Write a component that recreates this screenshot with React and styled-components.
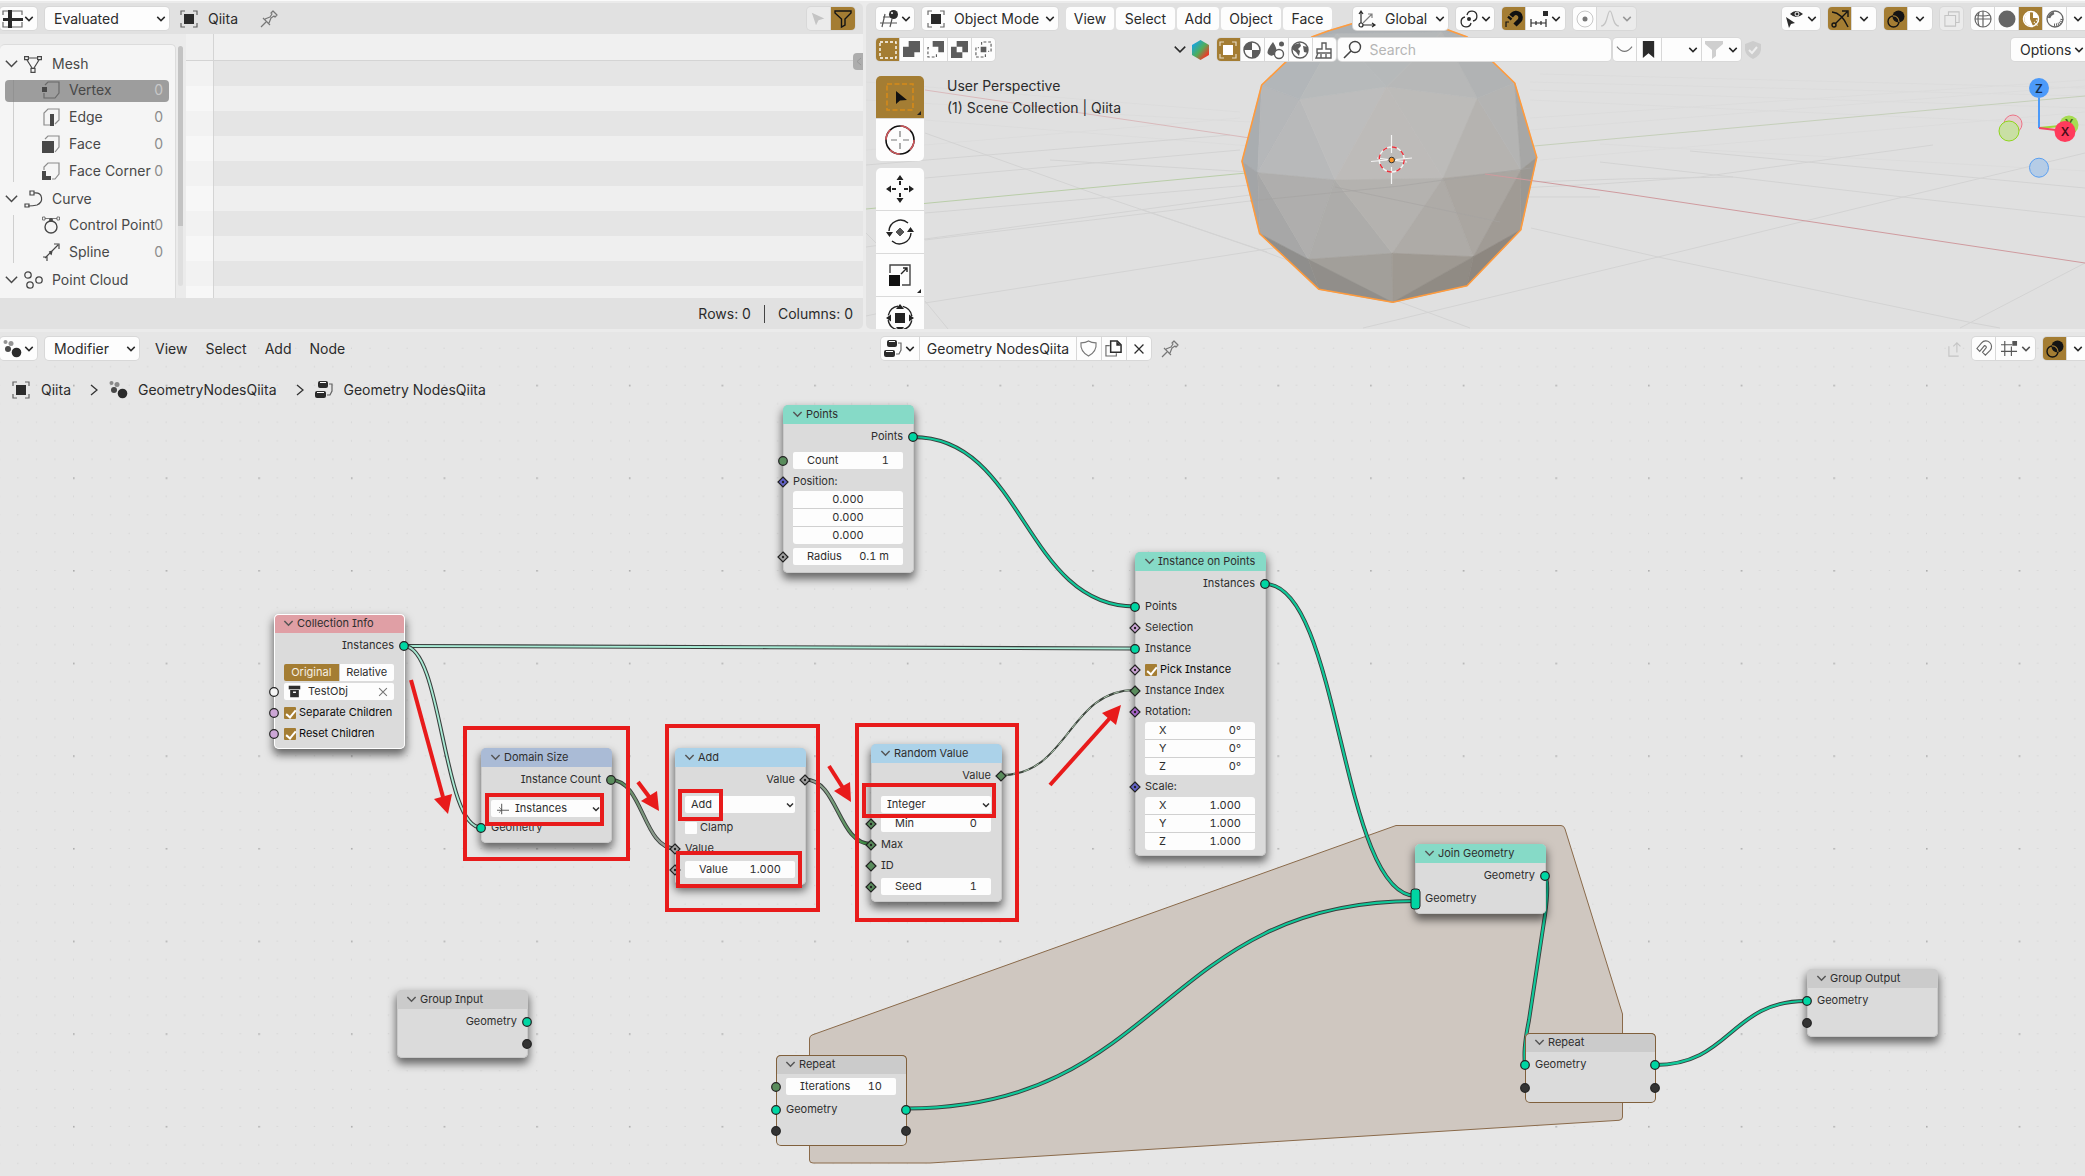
import React from 'react';
import styled, { createGlobalStyle, css } from 'styled-components';

const GOLD = '#a47d33';
const WIRE = '#10c99a';

const GlobalStyle = createGlobalStyle`
  * { box-sizing: border-box; }
  body {
    margin: 0;
    background: #ebebeb;
    color: #2b2b2b;
    font-family: Inter, "Noto Sans", sans-serif;
    font-size: 14px;
    line-height: 18px;
    overflow: hidden;
  }
  button, input, select {
    font: inherit;
    color: inherit;
    margin: 0;
    padding: 0;
    border: 0;
    background: none;
    outline: none;
  }
  select { appearance: none; }
  ul { list-style: none; margin: 0; padding: 0; }
  svg { display: block; flex: none; }
`;

/* ---------- icons ---------- */

const s = (d, extra = {}) => (
  <path d={d} fill="none" stroke="currentColor" strokeWidth="1.2" {...extra} />
);
const f = (d, extra = {}) => <path d={d} fill="currentColor" {...extra} />;

const ICONS = {
  spreadsheet: (
    <>
      {s('M0 5V1H5M9 1H19V5M19 12V17H9M5 17H0V12', { opacity: 0.7 })}
      {f('M5 0H9V18H5Z')}
      {f('M0 8H20V11H0Z')}
    </>
  ),
  object: (
    <>
      {s('M1 5V1H5M13 1H17V5M17 13V17H13M5 17H1V13', { opacity: 0.7 })}
      {f('M4 4H14V14H4Z')}
    </>
  ),
  pin: s('M1 17L6 12M3 8L10 15M5 9L10 7L12 4L11 3L13 1L17 5L15 7L14 6L11 8L9 13', {
    strokeLinejoin: 'round',
  }),
  cursor: f('M1 2L16 9L9 11L6 17Z'),
  filter: s('M1 1H17V3L11 9V15L7.500 17V9L1 3Z', { strokeWidth: 1.4 }),
  filterFill: f('M0 0H18V3L11 9V15L7 18V9L0 3Z'),
  mesh: (
    <>
      {s('M4 3H14M3 5L8 13M15 5L10 13')}
      {s('M.6 1.600H4.400V4.600H.6ZM13.600 1.600H17.400V4.600H13.600ZM7 13.400H11V17.400H7Z')}
    </>
  ),
  vertex: (
    <>
      {s('M3 4L6 1H17V12L13 17H2V12', { opacity: 0.6 })}
      {f('M0 6H5V11H0Z')}
    </>
  ),
  edge: (
    <>
      {s('M8 17H2V5L6 1H17V12L13 16', { opacity: 0.6 })}
      {f('M8 6H12V18H8Z')}
    </>
  ),
  face: (
    <>
      {s('M3 4L6 1H17V12L13 17', { opacity: 0.6 })}
      {f('M0 6H12V18H0Z')}
    </>
  ),
  corner: (
    <>
      {s('M2 8V5L6 1H17V12L13 17H10', { opacity: 0.6 })}
      {f('M0 9H4V14H9V18H0Z')}
    </>
  ),
  curve: (
    <>
      {s('M10 3C19 2 20 12 13 15Q9 16 4 16')}
      {s('M6 1H10V5H6ZM1 14H5V17H1Z')}
    </>
  ),
  control: (
    <>
      <circle cx="9" cy="11" r="6" fill="none" stroke="currentColor" strokeWidth="1.400" />
      {s('M3 2.500H15', { opacity: 0.7 })}
      {s('M.5 1H3V4H.5ZM15 1H17.500V4H15Z', { opacity: 0.7, strokeWidth: 1 })}
      <circle cx="9" cy="4" r="2" fill="currentColor" />
    </>
  ),
  spline: s('M3 15L16 2M12 1H17V6M1 14H5V18M7 9L10 8M9 12L10 8'),
  points: (
    <g fill="none" stroke="currentColor" strokeWidth="1.300">
      <circle cx="4" cy="4" r="3.200" />
      <circle cx="15" cy="9" r="3.200" />
      <circle cx="6" cy="14" r="3.200" />
    </g>
  ),
  viewport: (
    <>
      {s('M3 7H12M0 13H17M5 4L2 17M12 9L10 17', { opacity: 0.8 })}
      <circle cx="13.500" cy="4.500" r="4.500" fill="currentColor" />
      <circle cx="12" cy="3" r="1" fill="#fff" />
    </>
  ),
  nodes: (
    <>
      <circle cx="2.500" cy="2" r="2" fill="currentColor" opacity=".5" />
      <circle cx="8" cy="3.500" r="2.500" fill="currentColor" opacity=".5" />
      <circle cx="5" cy="9" r="3" fill="currentColor" opacity=".85" />
      <circle cx="13.500" cy="12.500" r="4.800" fill="currentColor" />
    </>
  ),
  tree: (
    <>
      <rect x="3" y="0" width="10" height="7" rx="2" fill="currentColor" />
      <rect x="0" y="10" width="11" height="7" rx="2" fill="currentColor" />
      <path d="M5 1.500H11M2 11.500H9" stroke="#fff" />
      {s('M14 3H17V10L15 14H12', { opacity: 0.7 })}
    </>
  ),
  newset: <rect x="1" y="1" width="16" height="16" fill="none" stroke="currentColor" strokeWidth="1.400" strokeDasharray="3 2" />,
  extend: f('M6 0H18V12H12V17H0V6H6Z'),
  subtract: (
    <>
      {f('M6 0H18V12H12V6H6Z')}
      {s('M10 14V17H1V7H4', { strokeDasharray: '3 2' })}
    </>
  ),
  difference: f('M6 0H18V12H12V18H0V6H6ZM6 6V12H12V6Z', { fillRule: 'evenodd' }),
  intersect: (
    <>
      {s('M7 4V1H17V11H14M11 14V17H1V7H4', { strokeDasharray: '3 2' })}
      {f('M6 6H12V12H6Z')}
    </>
  ),
  material: (
    <>
      <circle cx="9" cy="9" r="8" fill="none" stroke="currentColor" strokeWidth="1.500" />
      {f('M9 9V1A8 8 0 0 0 1 9ZM9 9V17A8 8 0 0 0 17 9Z')}
    </>
  ),
  drop: (
    <>
      {f('M6 1Q11 9 9 12Q5 17 1 13Q-1 10 6 1Z')}
      <circle cx="12" cy="13" r="4.500" fill="#fff" stroke="currentColor" strokeWidth="1.400" />
      <circle cx="14.500" cy="3" r="2.500" fill="currentColor" />
    </>
  ),
  world: (
    <>
      <circle cx="9" cy="9" r="8" fill="none" stroke="currentColor" strokeWidth="1.400" />
      {f('M2 4L9 2L10 5L7 8L9 10L8 15L5 11L1 8ZM12 5L17 6V12L13 11Z')}
    </>
  ),
  brush: s('M7 8V2H11V8H16V12H2V8ZM3 12L1 17H16V12M6 13V17M11 13V17', { strokeWidth: 1.4 }),
  search: (
    <>
      <circle cx="12" cy="6" r="5.500" fill="none" stroke="currentColor" strokeWidth="1.400" />
      {s('M8 10L1 17', { strokeWidth: 1.6 })}
    </>
  ),
  axes: (
    <>
      {s('M3 13V1M1 4L3 1L5 4M5 15H17M14 13L17 15L14 17')}
      <circle cx="3" cy="15" r="2" fill="none" stroke="currentColor" strokeWidth="1.200" />
      {s('M5 13L14 4M10 4H14V8', { opacity: 0.6 })}
    </>
  ),
  pivot: (
    <>
      {s('M7 5A5 5 0 1 1 13 11M11 13A5 5 0 1 1 5 7', { strokeWidth: 1.3 })}
      <circle cx="9" cy="9" r="2" fill="currentColor" />
    </>
  ),
  magnet: (
    <>
      <path d="M4 9L7.500 4.500A4.600 4.600 0 0 1 14.500 10.500L10 15" fill="none" stroke="#111" strokeWidth="4.500" strokeDasharray="2.500 1 30" />
      {s('M1 17V12H4')}
    </>
  ),
  magnetLine: s('M2 9L7 3A6 6 0 0 1 16 11L11 16L8 13L12 8A2 2 0 0 0 10 6L5 12Z'),
  increment: (
    <>
      {s('M1 9V17M6 11V15M11 11V15M16 9V17M1 13H16')}
      {f('M13 1H18V6H13Z')}
    </>
  ),
  snapgrid: (
    <>
      {s('M0 5H12M0 12H17M4 1V17M11 7V17')}
      {f('M12 1H17V6H12Z')}
    </>
  ),
  proportional: (
    <>
      <circle cx="9" cy="9" r="8" fill="none" stroke="currentColor" opacity=".4" />
      <circle cx="9" cy="9" r="2.500" fill="currentColor" />
    </>
  ),
  bell: s('M0 16C7 16 6 1 9 1S11 16 18 16'),
  eye: (
    <>
      {f('M4 4Q10 -2 17 4Q10 10 4 4Z')}
      <circle cx="11" cy="4" r="2" fill="none" stroke="#fff" />
      {f('M0 7L9 13L5 14L3 18Z')}
    </>
  ),
  gizmo: (
    <>
      {s('M1 2Q11 3 17 17M4 14L16 2M11 1H17V7', { strokeWidth: 1.4 })}
      <circle cx="3" cy="15" r="2" fill="none" stroke="currentColor" strokeWidth="1.400" />
    </>
  ),
  overlay: (
    <>
      <circle cx="11.500" cy="6.500" r="6" fill="currentColor" />
      <circle cx="6.500" cy="11.500" r="5.500" fill="none" stroke="currentColor" strokeWidth="1.400" />
      <path d="M6 6A5.500 5.500 0 0 1 12 12" fill="none" stroke="#a47d33" strokeWidth="1.200" />
    </>
  ),
  xray: s('M5 5V1H17V13H13M1 5H13V17H1Z'),
  wire: (
    <g fill="none" stroke="currentColor" strokeWidth="1.200">
      <circle cx="9" cy="9" r="8" />
      <path d="M1 9H17M9 1V17M2 5Q9 7 16 5M5 2Q3 9 5 16" />
    </g>
  ),
  solid: <circle cx="9" cy="9" r="8.500" fill="currentColor" />,
  preview: (
    <>
      <circle cx="9" cy="9" r="7.500" fill="none" stroke="currentColor" strokeWidth="1.500" />
      {f('M8 9V2A7 7 0 1 0 11 16L8 9ZM11 8V2Q16 4 16 8Z')}
      {s('M12 12L16 16M14 10L17 12', { strokeDasharray: '1 1' })}
    </>
  ),
  rendered: (
    <>
      <circle cx="9" cy="9" r="8" fill="none" stroke="currentColor" strokeWidth="1.300" />
      {s('M3 8Q4 4 8 3', { strokeWidth: 2.5 })}
      {s('M16 9Q15 15 8 15', { strokeDasharray: '1 1', strokeWidth: 3 })}
    </>
  ),
  smile: s('M1 6Q9 16 17 6'),
  bookmark: f('M3 0H15V18L9 13L3 18Z'),
  shieldCheck: (
    <>
      {f('M9 0L17 3V9Q16 15 9 18Q2 15 1 9V3Z')}
      <path d="M5 9L8 12L13 6" fill="none" stroke="#eee" strokeWidth="2" />
    </>
  ),
  shield: s('M9 1Q12 3 17 3Q18 12 9 17Q0 12 1 3Q6 3 9 1Z'),
  copy: (
    <>
      {s('M5 6H1V17H12V14', { opacity: 0.7 })}
      {s('M6 1H13L17 5V13H6Z', { strokeWidth: 1.6 })}
      {f('M12 1L17 6H12Z')}
    </>
  ),
  close: s('M4 4L14 14M14 4L4 14', { strokeWidth: 1.4 }),
  up: s('M1 6V17H12M10 13V2M6 6L10 2L14 6'),
  collection: (
    <>
      {f('M1 1H17V6H1Z')}
      {f('M3 7H15V17H3ZM7 9V11H11V9Z', { fillRule: 'evenodd' })}
    </>
  ),
  instance: (
    <>
      {s('M7 1V17M0 11H18', { strokeWidth: 1.6, opacity: 0.75 })}
      {s('M3 6L7 10L3 15', { opacity: 0.6 })}
    </>
  ),
};

const Icon = ({ name, size = 18, color }) => (
  <svg width={size} height={size} viewBox="0 0 18 18" overflow="visible" color={color} aria-hidden="true">
    {ICONS[name]}
  </svg>
);

const Chevron = ({ w = 10, color = 'currentColor' }) => (
  <svg width={w} height={w * 0.75} viewBox="0 0 8 6" aria-hidden="true">
    <path d="M1 1.500L4 4.500L7 1.500" fill="none" stroke={color} strokeWidth={12 / w} />
  </svg>
);

/* ---------- shared controls ---------- */

const Bar = styled.div`
  position: relative;
  display: flex;
  align-items: center;
  gap: ${(p) => p.$gap ?? 8}px;
  height: 31px;
  padding-left: ${(p) => p.$pl ?? 0}px;
`;

const Group = styled.div`
  display: flex;
  gap: ${(p) => p.$gap ?? 1}px;
  flex: none;
  border-radius: ${(p) => (p.$cut ? '4px 0 0 4px' : '4px')};
  overflow: hidden;
  ${(p) => !p.$gap && css`background: #d8d8d8; box-shadow: 0 0 0 1px #d8d8d8;`}
`;

const Btn = styled.button`
  display: flex;
  align-items: center;
  justify-content: ${(p) => p.$justify ?? 'center'};
  gap: 3px;
  height: 23px;
  width: ${(p) => p.$w ?? 23}px;
  padding: 0 ${(p) => p.$px ?? 0}px;
  flex: none;
  white-space: nowrap;
  background: ${(p) => (p.$on ? GOLD : p.$off ? '#ebebeb' : '#fdfdfd')};
  color: ${(p) => p.$color ?? (p.$on ? '#141414' : p.$off ? '#c4c4c4' : '#2b2b2b')};
  border-radius: ${(p) => p.$r ?? 0}px;
`;

const Drop = styled.label`
  position: relative;
  display: flex;
  align-items: center;
  height: 23px;
  width: ${(p) => p.$w}px;
  padding: 0 3px 0 ${(p) => (p.$icon ? 5 : 9)}px;
  flex: none;
  background: #fdfdfd;
  border-radius: 4px;
  box-shadow: 0 0 0 1px #d8d8d8;
  select {
    flex: 1;
    min-width: 0;
    height: 100%;
    margin-left: ${(p) => (p.$icon ? 9 : 0)}px;
  }
`;

const Dropdown = ({ icon, value, label, w }) => (
  <Drop $w={w} $icon={icon}>
    {icon && <Icon name={icon} />}
    <select aria-label={label} defaultValue={value}>
      <option>{value}</option>
    </select>
    <Chevron />
  </Drop>
);

const Spacer = styled.div`
  flex: ${(p) => p.$n ?? 1} 1 0;
`;

const Inline = styled.span`
  display: flex;
  align-items: center;
  gap: ${(p) => p.$gap ?? 10}px;
  flex: none;
  padding-left: ${(p) => p.$pl ?? 0}px;
  white-space: nowrap;
  color: ${(p) => p.$color ?? 'inherit'};
`;

/* ---------- page ---------- */

const Page = styled.div`
  display: flex;
  flex-direction: column;
  height: 100vh;
`;

const TopStrip = styled.div`
  height: 3px;
  flex: none;
  border-top: 1px solid #fafafa;
`;

const Upper = styled.div`
  display: grid;
  grid-template-columns: minmax(0, 863fr) minmax(0, 1219fr);
  gap: 3px;
  height: 326px;
  margin-bottom: 3px;
  flex: none;
`;

/* ---------- spreadsheet ---------- */

const Sheet = styled.section`
  display: flex;
  flex-direction: column;
  background: #e1e1e1;
  border-radius: 0 5px 5px 0;
  overflow: hidden;
`;

const SheetMain = styled.div`
  position: relative;
  display: flex;
  flex: 1;
  min-height: 0;
`;

const TreeSide = styled.div`
  display: flex;
  gap: 2px;
  width: 186px;
  padding-top: 10px;
  background: #ebebeb;
  overflow: hidden;
`;

const Tree = styled.ul`
  width: 176px;
  padding-top: 5px !important;
  border: 1px solid #dcdcdc;
  border-left: 0;
  border-bottom: 0;
  border-radius: 5px 5px 0 0;
  background: #f5f5f5;
  color: #484848;
`;

const SubTree = styled.ul`
  position: relative;
  display: flex;
  flex-direction: column;
  &::before {
    content: '';
    position: absolute;
    left: 13px;
    top: 3px;
    bottom: 3px;
    width: 1px;
    background: #cfcfcf;
  }
`;

const Branch = styled.div`
  display: flex;
  align-items: center;
  height: 27px;
  padding-left: 4px;
  gap: 10px;
  button { display: flex; margin-right: -5px; }
`;

const Leaf = styled.li`
  position: relative;
  display: flex;
  align-items: center;
  height: 22px;
  margin: 3px 6px 2px 5px;
  padding: 0 6px 2px 37px;
  gap: 9px;
  border-radius: 4px;
  white-space: nowrap;
  background: ${(p) => (p.$sel ? 'rgba(120,120,120,.7)' : 'none')};
  span { flex: 1; min-width: 0; }
  b { font-weight: 400; color: ${(p) => (p.$sel ? '#c8c8c8' : '#8c8c8c')}; }
`;

const Scroll = styled.div`
  width: 5px;
  height: 240px;
  margin-top: 2px;
  border-radius: 3px;
  background: linear-gradient(#c3c3c3 0 180px, #dfdfdf 180px);
`;

const Grid = styled.div`
  flex: 1;
  display: grid;
  grid-template-rows: 27px 1fr;
`;

const GridHead = styled.div`
  background: linear-gradient(90deg, transparent 27px, #d4d4d4 27px 28px, transparent 28px), #f0f0f0;
  border-bottom: 1px solid #d4d4d4;
`;

const GridRows = styled.div`
  background:
    linear-gradient(90deg, rgba(255,255,255,.5) 27px, #d4d4d4 27px 28px, transparent 28px),
    repeating-linear-gradient(#e5e5e5 0 25px, #efefef 25px 50px);
`;

const SideTab = styled.button`
  position: absolute;
  right: 0;
  top: 19px;
  width: 10px;
  height: 17px;
  border-radius: 4px 0 0 4px;
  background: #adadad;
`;

const SheetFoot = styled.footer`
  display: flex;
  align-items: center;
  justify-content: flex-end;
  gap: 13px;
  height: 31px;
  padding-right: 10px;
  i { width: 1px; height: 18px; background: #444; }
`;

const LeafRow = ({ icon, text, sel }) => (
  <Leaf $sel={sel}>
    <Icon name={icon} />
    <span>{text}</span>
    <b>0</b>
  </Leaf>
);

const BranchRow = ({ icon, text, children }) => (
  <li>
    <Branch>
      <button aria-label={`Collapse ${text}`}>
        <Chevron w={15} />
      </button>
      <Icon name={icon} />
      <span>{text}</span>
    </Branch>
    <SubTree>{children}</SubTree>
  </li>
);

const Spreadsheet = () => (
  <Sheet>
    <Bar>
      <Group>
        <Btn $w={37} aria-label="Editor type"><Icon name="spreadsheet" /><Chevron /></Btn>
      </Group>
      <Dropdown w={124} value="Evaluated" label="Object evaluation state" />
      <Inline $pl={3}>
        <Icon name="object" />Qiita
      </Inline>
      <Inline $pl={14} $color="#777"><Icon name="pin" /></Inline>
      <Spacer />
      <Group>
        <Btn $off aria-label="Only selected"><Icon name="cursor" size={15} /></Btn>
        <Btn $on $w={24} aria-label="Use filter"><Icon name="filter" /></Btn>
      </Group>
      <span />
    </Bar>
    <SheetMain>
      <TreeSide>
        <Tree>
          <BranchRow icon="mesh" text="Mesh">
            <LeafRow icon="vertex" text="Vertex" sel />
            <LeafRow icon="edge" text="Edge" />
            <LeafRow icon="face" text="Face" />
            <LeafRow icon="corner" text="Face Corner" />
          </BranchRow>
          <BranchRow icon="curve" text="Curve">
            <LeafRow icon="control" text="Control Point" />
            <LeafRow icon="spline" text="Spline" />
          </BranchRow>
          <BranchRow icon="points" text="Point Cloud" />
        </Tree>
        <Scroll />
      </TreeSide>
      <Grid>
        <GridHead />
        <GridRows />
      </Grid>
      <SideTab aria-label="Show sidebar">
        <svg width="10" height="17"><path d="M8 5L4 8.500L8 12" fill="none" stroke="#999" /></svg>
      </SideTab>
    </SheetMain>
    <SheetFoot>
      <span>Rows: 0</span><i /><span>Columns: 0</span>
    </SheetFoot>
  </Sheet>
);

/* ---------- 3D viewport ---------- */

const View3D = styled.section`
  position: relative;
  background: #e0e0e0;
  border-radius: 5px 0 0 5px;
  overflow: hidden;
`;

const SceneSvg = styled.svg`
  position: absolute;
  inset: 0;
  width: 100%;
  height: 100%;
`;

const SearchBox = styled.label`
  display: flex;
  align-items: center;
  gap: 9px;
  flex: none;
  width: 273px;
  height: 23px;
  padding: 0 5px;
  border-radius: 4px;
  background: #fdfdfd;
  color: #444;
  box-shadow: 0 0 0 1px #d8d8d8;
  input { flex: 1; min-width: 0; }
  input::placeholder { color: #b5b5b5; opacity: 1; }
`;

const ToolArea = styled.div`
  position: relative;
  display: flex;
  gap: 23px;
  padding: 10px 0 0 10px;
`;

const Tools = styled.div`
  display: flex;
  flex-direction: column;
  gap: 7px;
  padding-top: 1px;
`;

const ToolGroup = styled.div`
  display: flex;
  flex-direction: column;
  gap: 1px;
  border-radius: 5px;
  overflow: hidden;
  background: #dadada;
`;

const Tool = styled.button`
  position: relative;
  display: grid;
  place-items: center;
  width: 48px;
  height: 42px;
  background: ${(p) => (p.$on ? GOLD : '#fdfdfd')};
  ${(p) => p.$more && css`
    &::after {
      content: '';
      position: absolute;
      right: 3px;
      bottom: 3px;
      border: 2px solid transparent;
      border-right-color: #222;
      border-bottom-color: #222;
    }
  `}
`;

const Caption = styled.div`
  line-height: 22px;
  p { margin: 0; }
`;

const Z = (pts) =>
  pts
    .split(' ')
    .map((p) => p.split(',').map(Number))
    .map(([x, y]) => `${(x / 3 + 1140).toFixed(1)},${(y / 3).toFixed(1)}`)
    .join(' ');

const FACETS = [
  ['365,255 306,484 353,518', '#a9adb0'],
  ['365,255 480,298 353,518', '#b5b7b9'],
  ['480,298 585,540 353,518', '#b8b9ba'],
  ['480,298 740,260 585,540', '#bdbdbd'],
  ['740,260 909,535 585,540', '#bdbbb9'],
  ['740,260 1012,295 909,535', '#bcbbb9'],
  ['1012,295 1143,510 909,535', '#b5b3b0'],
  ['1012,295 1124,249 1143,510', '#b4b4b3'],
  ['1124,249 1190,472 1143,510', '#a7a7a6'],
  ['353,518 306,484 359,701', '#a3a5a7'],
  ['353,518 359,701 505,778', '#a7a7a7'],
  ['353,518 585,540 505,778', '#afaead'],
  ['585,540 757,760 505,778', '#adacaa'],
  ['585,540 909,535 757,760', '#b4b2af'],
  ['909,535 757,760 1000,770', '#aeaba7'],
  ['909,535 1143,510 1000,770', '#aaa6a1'],
  ['1143,510 1190,472 1142,690', '#9b9893'],
  ['1143,510 1000,770 1142,690', '#a09b95'],
  ['359,701 505,778 537,868', '#8f8e8c'],
  ['505,778 757,760 758,907', '#a29f9a'],
  ['505,778 537,868 758,907', '#918e8a'],
  ['757,760 1000,770 758,907', '#9e9992'],
  ['1000,770 981,857 758,907', '#908b84'],
  ['1000,770 1142,690 981,857', '#8d8780'],
  ['365,255 517,110 590,100 480,298', '#b2b6b9'],
  ['590,100 480,298 740,260', '#b7babb'],
  ['590,100 905,95 740,260', '#b6b9ba'],
  ['905,95 740,260 1012,295', '#b7b8b8'],
  ['905,95 980,110 1124,249 1012,295', '#b1b3b4'],
  ['517,110 566,92 745,38 925,90 980,110 905,95 590,100', '#acb0b3'],
];

const OUTLINE =
  '1190,472 1142,690 981,857 758,907 537,868 359,701 306,484 365,255 517,110 566,92 745,38 925,90 980,110 1124,249';

const GRID_LINES =
  'M866 233L880 247M925 133L1087 191L1260 250L1470 328M925 240L1250 201L1600 184L1700 177L1933 145M866 247L1287 190L1620 179L1733 177M925 303L1286 246L1520 197L1600 197M1363 328L1658 257L1903 197L2085 153M1140 209L1267 252M1531 228L1658 257L1973 323L2000 328M1960 328L2085 263M1600 162L1733 177L1903 197L2085 217M866 316L880 313M925 301L948 329M1690 151L2085 188M1050 160L1250 172M925 178L1240 150M866 165L1230 135M925 213L1250 185';

const HORIZON = 'M866 82L1240 112M866 100L1250 122M925 120L1250 146M866 150L1240 118M1530 130L2085 86M1530 118L2085 80M1530 100L2085 125M1530 90L2085 108M1600 144L2085 171M1540 160L2085 112M1530 82L2085 96M1540 74L2085 88';

const Scene = () => (
  <SceneSvg viewBox="866 3 1219 326" preserveAspectRatio="xMidYMid slice" aria-label="3D scene">
    <path d={HORIZON} stroke="#dcdcdc" fill="none" />
    <path d={GRID_LINES} stroke="#d3d3d3" fill="none" />
    <path d="M925 90L1250 138" stroke="#d9b9bb" />
    <path d="M866 209L1257 172" stroke="#b9cda8" />
    <path d="M1534 146L1600 140L2085 96" stroke="#c5cfba" fill="none" />
    {FACETS.map(([pts, fill]) => (
      <polygon key={pts} points={Z(pts)} fill={fill} stroke={fill} strokeWidth=".6" />
    ))}
    <path d="M1250 201L1400 186L1531 168M1335 187L1500 222" stroke="#a5a3a1" opacity=".6" fill="none" />
    <path d="M1485 174L1620 193L2085 263" stroke="#cf9a9e" fill="none" />
    <polygon points={Z(OUTLINE)} fill="none" stroke="#ff9b3d" strokeWidth="1.600" strokeLinejoin="round" />
    <g fill="none" stroke="#f4f4f4" strokeWidth="1.200">
      <path d="M1391.500 135V153M1391.500 167V184M1371 161.500L1387 160M1396 159.500L1412 158M1377 158L1407 162" />
      <circle cx="1391.700" cy="159.500" r="12.500" strokeWidth="1.400" />
      <circle cx="1391.700" cy="159.500" r="12.500" stroke="#e8323c" strokeWidth="1.400" strokeDasharray="4.900 4.900" />
    </g>
    <circle cx="1391.700" cy="160" r="2.800" fill="#ff9a2b" stroke="#333" />
    <g fontSize="12" fontWeight="600" textAnchor="middle">
      <circle cx="2013" cy="124" r="9" fill="#e6cdd1" stroke="#ec7386" />
      <circle cx="2009" cy="131" r="10" fill="#c9dfa4" stroke="#8fd61c" />
      <path d="M2039 128L2060 126" stroke="#9dd83a" strokeWidth="2" />
      <circle cx="2069" cy="125" r="9.500" fill="#a6dc52" />
      <text x="2069" y="128" fill="#46691a">Y</text>
      <path d="M2039 128V98" stroke="#4c9af9" strokeWidth="2" />
      <path d="M2039 128L2056 130" stroke="#f54263" strokeWidth="2" />
      <circle cx="2065" cy="131.500" r="10.500" fill="#ff3b5c" />
      <text x="2065" y="136" fill="#4a0d19">X</text>
      <circle cx="2039" cy="88" r="10" fill="#4c9af9" />
      <text x="2039" y="92.500" fill="#16304f">Z</text>
      <circle cx="2039" cy="167.700" r="9.500" fill="#b5cce6" stroke="#5a9ff0" />
    </g>
  </SceneSvg>
);

const Viewport = () => (
  <View3D>
    <Scene />
    <Bar $pl={10}>
      <Group><Btn $w={38} aria-label="Editor type"><Icon name="viewport" /><Chevron /></Btn></Group>
      <Dropdown w={136} icon="object" value="Object Mode" label="Mode" />
      <Group as="nav" $gap={2}>
        <Btn $w={48} $r={4}>View</Btn>
        <Btn $w={59} $r={4}>Select</Btn>
        <Btn $w={42} $r={4}>Add</Btn>
        <Btn $w={60} $r={4}>Object</Btn>
        <Btn $w={49} $r={4}>Face</Btn>
      </Group>
      <Inline $pl={5} />
      <Dropdown w={95} icon="axes" value="Global" label="Transform orientation" />
      <Group><Btn $w={38} aria-label="Pivot point"><Icon name="pivot" /><Chevron /></Btn></Group>
      <Group>
        <Btn $on aria-label="Snap"><Icon name="magnet" /></Btn>
        <Btn $w={39} aria-label="Snap target"><Icon name="increment" /><Chevron /></Btn>
      </Group>
      <Group>
        <Btn $color="#777" aria-label="Proportional editing"><Icon name="proportional" /></Btn>
        <Btn $off $w={39} aria-label="Falloff"><Icon name="bell" /><Chevron color="#999" /></Btn>
      </Group>
      <Spacer />
      <Group><Btn $w={38} aria-label="Visibility"><Icon name="eye" /><Chevron /></Btn></Group>
      <Group>
        <Btn $on aria-label="Show gizmos"><Icon name="gizmo" /></Btn>
        <Btn $w={24} aria-label="Gizmo options"><Chevron /></Btn>
      </Group>
      <Group>
        <Btn $on aria-label="Show overlays"><Icon name="overlay" /></Btn>
        <Btn $w={24} aria-label="Overlay options"><Chevron /></Btn>
      </Group>
      <Group><Btn $off aria-label="X-ray"><Icon name="xray" size={16} /></Btn></Group>
      <Group $cut>
        <Btn $color="#666" aria-label="Wireframe"><Icon name="wire" /></Btn>
        <Btn $color="#666" aria-label="Solid"><Icon name="solid" /></Btn>
        <Btn $on $color="#fff" aria-label="Material preview"><Icon name="preview" /></Btn>
        <Btn $color="#666" aria-label="Rendered"><Icon name="rendered" /></Btn>
        <Btn $w={18} $px={2} $justify="flex-end" aria-label="Shading options"><Chevron /></Btn>
      </Group>
    </Bar>
    <Bar $pl={10} $gap={0}>
      <Group>
        <Btn $on $color="#fff" aria-label="Set selection"><Icon name="newset" /></Btn>
        <Btn $color="#5c5c5c" aria-label="Extend selection"><Icon name="extend" size={17} /></Btn>
        <Btn $color="#5c5c5c" aria-label="Subtract selection"><Icon name="subtract" size={17} /></Btn>
        <Btn $color="#5c5c5c" aria-label="Difference"><Icon name="difference" size={17} /></Btn>
        <Btn $color="#5c5c5c" aria-label="Intersect"><Icon name="intersect" size={17} /></Btn>
      </Group>
      <Spacer $n={178} />
      <Inline $gap={5}>
        <Chevron w={14} />
        <svg width="17" height="20" viewBox="0 0 17 20">
          <defs>
            <linearGradient id="hex" x1="0" y1="0" x2="1" y2="1">
              <stop offset=".15" stopColor="#1aa5d8" />
              <stop offset=".5" stopColor="#4fae5a" />
              <stop offset=".8" stopColor="#e5402a" />
            </linearGradient>
          </defs>
          <path d="M8.500 0L17 5V15L8.500 20L0 15V5Z" fill="url(#hex)" />
        </svg>
        <Inline $pl={3} />
      </Inline>
      <Group>
        <Btn $on $color="#fff" aria-label="Object"><Icon name="object" /></Btn>
        <Btn $color="#5c5c5c" aria-label="Materials"><Icon name="material" /></Btn>
        <Btn $color="#5c5c5c" aria-label="Textures"><Icon name="drop" /></Btn>
        <Btn $color="#5c5c5c" aria-label="World"><Icon name="world" /></Btn>
        <Btn $color="#5c5c5c" aria-label="Brushes"><Icon name="brush" /></Btn>
      </Group>
      <Inline $gap={2}>
        <span />
        <SearchBox>
          <Icon name="search" />
          <input type="search" placeholder="Search" aria-label="Search" />
        </SearchBox>
        <Group>
          <Btn $color="#777" aria-label="Hidden"><Icon name="smile" size={17} /></Btn>
          <Btn $w={24} aria-label="Bookmarks"><Icon name="bookmark" size={17} /></Btn>
          <Btn $w={39} $px={3} $justify="flex-end" aria-label="Catalog"><Chevron /></Btn>
          <Btn $w={39} $px={3} $justify="space-between" aria-label="Filter"><Icon name="filterFill" color="#cfcfcf" /><Chevron /></Btn>
        </Group>
      </Inline>
      <Inline $gap={3} $color="#cdcdcd"><span /><Icon name="shieldCheck" /></Inline>
      <Spacer $n={250} />
      <Group $cut>
        <Btn $w={74} $px={9} $justify="flex-start">Options<Chevron /></Btn>
      </Group>
    </Bar>
    <ToolArea>
      <Tools>
        <ToolGroup>
          <Tool $on $more aria-label="Select box">
            <svg width="28" height="28" viewBox="0 0 28 28">
              <rect x="1" y="1" width="26" height="26" fill="none" stroke="#d58a1a" strokeWidth="1.600" strokeDasharray="5 2.500" />
              <path d="M10 8L21 17L14 17.500L10 21Z" fill="#111" />
            </svg>
          </Tool>
          <Tool aria-label="Cursor">
            <svg width="30" height="30" viewBox="0 0 30 30" fill="none">
              <circle cx="15" cy="15" r="14" stroke="#111" strokeWidth="1.600" />
              <circle cx="15" cy="15" r="14" stroke="#d0575c" strokeWidth="1.600" strokeDasharray="11 11" />
              <path d="M15 6V12M15 18V24M6 15H12M18 15H24" stroke="#777" strokeWidth="1.200" />
            </svg>
          </Tool>
        </ToolGroup>
        <ToolGroup>
          <Tool aria-label="Move">
            <svg width="28" height="28" viewBox="0 0 28 28" fill="#222">
              <path d="M14 0L17.500 5H10.500ZM14 28L17.500 23H10.500ZM0 14L5 10.500V17.500ZM28 14L23 10.500V17.500ZM13 6H15V10H13ZM13 18H15V22H13ZM6 13H10V15H6ZM18 13H22V15H18Z" />
            </svg>
          </Tool>
          <Tool aria-label="Rotate">
            <svg width="28" height="28" viewBox="0 0 28 28" fill="none">
              <path d="M3 13A11.500 11.500 0 0 1 22 5M25 15A11.500 11.500 0 0 1 6 23" stroke="#222" strokeWidth="1.400" />
              <path d="M0 14H7L3.500 19ZM21 14H28L24.500 9Z" fill="#222" />
              <path d="M14 10L18 14L14 18L10 14Z" fill="#555" stroke="#555" strokeLinejoin="round" />
            </svg>
          </Tool>
          <Tool $more aria-label="Scale">
            <svg width="22" height="22" viewBox="0 0 22 22" fill="none">
              <path d="M1 9V1H21V21H13" stroke="#444" strokeWidth="1.400" />
              <path d="M0 11H11V22H0Z" fill="#111" />
              <path d="M12 10L18 4M14 4H18V8" stroke="#222" strokeWidth="1.400" />
            </svg>
          </Tool>
          <Tool aria-label="Transform">
            <svg width="28" height="28" viewBox="0 0 28 28" fill="none">
              <circle cx="14" cy="14" r="12" stroke="#222" strokeWidth="1.400" strokeDasharray="14 4.850" strokeDashoffset="-2.500" />
              <path d="M9 9H19V19H9ZM14 0L18 5H10ZM14 28L18 23H10ZM0 14L5 10.500V17.500ZM28 14L23 10.500V17.500Z" fill="#222" />
            </svg>
          </Tool>
        </ToolGroup>
      </Tools>
      <Caption>
        <p>User Perspective</p>
        <p>(1) Scene Collection | Qiita</p>
      </Caption>
    </ToolArea>
  </View3D>
);

/* ---------- node editor ---------- */

const Editor = styled.section`
  position: relative;
  flex: 1;
  min-height: 0;
  background: #e6e6e6;
  overflow: hidden;
`;

const EditorBar = styled.header`
  position: relative;
  display: grid;
  grid-template-columns: minmax(0, 880fr) auto minmax(0, 905fr);
  align-items: center;
  height: 33px;
`;

const MenuList = styled.nav`
  display: flex;
  gap: 18px;
  padding-left: 8px;
  white-space: nowrap;
`;

const Crumbs = styled.nav`
  position: relative;
  display: flex;
  align-items: center;
  gap: 11px;
  height: 50px;
  padding-left: 12px;
`;

const Layer = styled.svg`
  position: absolute;
  left: 0;
  top: 0;
  width: 100%;
  height: 100%;
  pointer-events: none;
`;

const Canvas = styled.div`
  position: absolute;
  inset: 0;
`;

const NodeBox = styled.article`
  position: absolute;
  left: ${(p) => p.$x}px;
  top: ${(p) => p.$y}px;
  width: 131px;
  padding-bottom: 5px;
  border-radius: 5px;
  background: #dbdbdb;
  color: #2e2e2e;
  font-size: 11px;
  line-height: 17px;
  font-feature-settings: "cv08", "tnum";
  box-shadow:
    ${(p) => (p.$zone ? 'inset 0 0 0 1px #80603c' : `inset 0 0 0 1px ${p.$sel ? '#fff' : '#c9c9c9'}, 0 5px 8px 1px rgba(0,0,0,.55)`)};
`;

const NodeHead = styled.header`
  display: flex;
  align-items: center;
  gap: 3px;
  height: 19px;
  padding: 0 8px 2px;
  border: 1px solid ${(p) => (p.$zone ? '#80603c' : p.$sel ? '#fff' : p.$tone)};
  border-bottom: 0;
  border-radius: 5px 5px 0 0;
  background: ${(p) => p.$tone};
  button { display: flex; color: #555; }
  h3 { margin: 0; font: inherit; white-space: nowrap; }
`;

const Row = styled.div`
  position: relative;
  display: flex;
  align-items: ${(p) => (p.$end ? 'flex-end' : 'center')};
  justify-content: ${(p) => (p.$out ? 'flex-end' : 'flex-start')};
  height: ${(p) => p.$h ?? 21}px;
  padding: 0 11px 0 10px;
  white-space: nowrap;
`;

const SocketBox = styled.svg`
  position: absolute;
  top: 50%;
  margin-top: -6px;
  ${(p) => (p.$right ? 'right: -5px;' : 'left: -6px;')}
`;

const SOCK = {
  geo: '#00d6a3',
  int: '#598c5c',
  float: '#a1a1a1',
  vec: '#6363c7',
  bool: '#cca6d6',
  rot: '#a663c7',
  coll: '#f5f5f5',
  none: '#333',
};

const Socket = ({ type, right, shape = 'circle' }) => (
  <SocketBox width="12" height="12" viewBox="0 0 12 12" $right={right} overflow="visible" aria-hidden="true">
    {shape === 'circle' ? (
      <circle cx="6" cy="6" r="4.300" fill={SOCK[type]} stroke="#222" strokeWidth="1.200" />
    ) : shape === 'multi' ? (
      <rect x="2" y="-4" width="9" height="20" rx="3" fill={SOCK[type]} stroke="#222" />
    ) : (
      <path d="M6 1L11 6L6 11L1 6Z" fill={SOCK[type]} stroke="#222" strokeWidth="1.200" />
    )}
    {shape === 'dot' && <circle cx="6" cy="6" r="1.200" fill="#222" />}
  </SocketBox>
);

const Field = styled.label`
  display: flex;
  align-items: center;
  width: 100%;
  height: 17px;
  padding: 0 14px;
  border-radius: 2px;
  background: #fdfdfd;
  input {
    flex: 1;
    min-width: 0;
    width: 20px;
    height: 17px;
    text-align: ${(p) => (p.$center ? 'center' : 'right')};
  }
`;

const FieldStack = styled.div`
  display: flex;
  flex-direction: column;
  gap: 1px;
  margin: 0 11px 1px 10px;
  border-radius: 3px;
  overflow: hidden;
  background: #d0d0d0;
  ${Field} { border-radius: 0; }
`;

const NodeSelect = styled.label`
  display: flex;
  align-items: center;
  gap: 6px;
  width: 100%;
  height: 17px;
  padding: 0 1px 0 6px;
  border-radius: 2px;
  background: #fdfdfd;
  select { flex: 1; min-width: 0; height: 17px; }
`;

const Check = styled.label`
  display: flex;
  align-items: center;
  gap: 3px;
  color: ${(p) => (p.$dim ? '#2e2e2e' : '#0c0c0c')};
  input {
    appearance: none;
    position: relative;
    width: 12px;
    height: 12px;
    border-radius: 1px;
    background: #fdfdfd;
  }
  input:checked { background: ${GOLD}; }
  input:checked::after {
    content: '';
    position: absolute;
    left: 4px;
    top: 1px;
    width: 4px;
    height: 8px;
    border: solid #fff;
    border-width: 0 2px 2px 0;
    transform: rotate(40deg);
  }
`;

const Toggle = styled.div`
  display: grid;
  grid-template-columns: 1fr 1fr;
  gap: 1px;
  width: 100%;
  border-radius: 2px;
  overflow: hidden;
  background: #ccc;
  button { height: 17px; background: #fdfdfd; }
  button[aria-pressed='true'] { background: ${GOLD}; color: #f5efe3; }
`;

const Picker = styled.div`
  display: flex;
  align-items: center;
  gap: 7px;
  width: 100%;
  height: 17px;
  padding: 0 4px;
  border-radius: 2px;
  background: #fdfdfd;
  input { flex: 1; min-width: 0; width: 20px; }
  button { display: flex; color: #777; }
`;

const Node = ({ title, x, y, tone, sel, zone, children }) => (
  <NodeBox $x={x} $y={y} $sel={sel} $zone={zone}>
    <NodeHead $tone={tone} $sel={sel} $zone={zone}>
      <button aria-label={`Collapse ${title}`}><Chevron w={11} /></button>
      <h3>{title}</h3>
    </NodeHead>
    {children}
  </NodeBox>
);

const Out = ({ label, type, shape }) => (
  <Row $h={25} $out>{label}<Socket right type={type} shape={shape} /></Row>
);

const In = ({ label, type, shape, h }) => (
  <Row $h={h}><Socket type={type} shape={shape} />{label}</Row>
);

const Num = ({ label, value, name }) => (
  <Field $center={!label}>
    {label && <span>{label}</span>}
    <input defaultValue={value} aria-label={name ?? label} />
  </Field>
);

const NumRow = ({ label, value, type, shape, h }) => (
  <Row $h={h}>
    <Socket type={type} shape={shape} />
    <Num label={label} value={value} />
  </Row>
);

const CheckRow = ({ label, type, shape, checked, dim }) => (
  <Row>
    {type && <Socket type={type} shape={shape} />}
    <Check $dim={dim}>
      <input type="checkbox" defaultChecked={checked} />
      {label}
    </Check>
  </Row>
);

const SelectRow = ({ value, label, icon, end }) => (
  <Row $h={25} $end={end}>
    <NodeSelect>
      {icon && <Icon name={icon} size={12} />}
      <select aria-label={label} defaultValue={value}>
        <option>{value}</option>
      </select>
      <Chevron w={8} />
    </NodeSelect>
  </Row>
);

const TEAL = '#86dac7';
const BLUE = '#abd2e9';

/* Node links run between sockets with horizontal handles half the span long. */
const curve = (x1, y1, x2, y2) => {
  const m = (x1 + x2) / 2;
  return `M${x1} ${y1}C${m} ${y1} ${m} ${y2} ${x2} ${y2}`;
};

const Link = ({ d, color = WIRE, thin }) => (
  <g fill="none" strokeLinecap="round">
    <path d={d} stroke="#3a3f3d" strokeWidth="4" />
    <path d={d} stroke={color} strokeWidth={thin ? 1.8 : 2.2} />
  </g>
);

const ArrowMark = ({ from, tip, base }) => (
  <>
    <path d={`M${from}L${base[2]}`} stroke="#e81b1b" strokeWidth="4" />
    <polygon points={`${tip} ${base[0]} ${base[1]}`} fill="#e81b1b" />
  </>
);

const MARKS = [
  [463, 726, 167, 135],
  [485, 793, 119, 33],
  [665, 724, 155, 188],
  [678, 789, 45, 32],
  [676, 851, 126, 37],
  [855, 723, 164, 199],
  [862, 783, 134, 35],
];

const Backdrop = () => (
  <Layer>
    <defs>
      <pattern id="dots" x="73" y="52.700" width="92.650" height="92.650" patternUnits="userSpaceOnUse">
        {[0, 1, 2, 3, 4].map((i) =>
          [0, 1, 2, 3, 4].map((j) => (
            <rect
              key={`${i}${j}`}
              x={i * 18.53}
              y={j * 18.53}
              width={i || j ? 1 : 1.6}
              height={i || j ? 1 : 1.6}
              fill={i || j ? '#cdcdcd' : '#adadad'}
            />
          ))
        )}
      </pattern>
      <linearGradient id="g2f"><stop stopColor="#4f8a52" /><stop offset=".9" stopColor="#a1a1a1" /></linearGradient>
      <linearGradient id="f2g"><stop stopColor="#a8a8a8" /><stop offset=".9" stopColor="#3f8f45" /></linearGradient>
    </defs>
    <rect width="100%" height="100%" fill="url(#dots)" />
    <g transform="translate(0 -332)">
      <path
        d="M812 1035L1396 825.500H1561Q1564 825.500 1565 829L1622.500 1014V1117Q1622.500 1120 1619 1120.300L930 1163H813Q809.500 1163 809.500 1160V1039Q809.500 1036 812 1035Z"
        fill="#cfc7c0"
        stroke="#8a6a4a"
      />
      <Link d={curve(913, 437, 1135, 606.5)} />
      <Link thin d={curve(404, 646, 1135, 648.5)} color="#a9ecd6" />
      <Link thin d={curve(404, 646, 481, 827.5)} color="#a9ecd6" />
      <Link d={curve(611, 780, 675, 848.5)} color="url(#g2f)" />
      <Link d={curve(805, 779.5, 871, 844)} color="url(#f2g)" />
      <path d={curve(1002, 775, 1135, 690)} fill="none" stroke="#3c463d" strokeWidth="2" />
      <path d={curve(1002, 775, 1135, 690)} fill="none" stroke="#a9c2aa" strokeWidth="1" strokeDasharray="6 5" />
      <Link d={curve(1265, 584, 1416, 896)} />
      <Link d={curve(907, 1108.5, 1416, 901)} />
      <Link d="M1545 876C1549 880 1547 900 1545 915L1529 1020C1524 1045 1524 1055 1525 1066" />
      <Link d={curve(1655, 1065, 1806, 1001)} />
    </g>
  </Layer>
);

const Annotations = () => (
  <Layer>
    <g transform="translate(0 -332)">
      {MARKS.map(([x, y, w, h]) => (
        <rect key={`${x}${y}`} x={x + 2} y={y + 2} width={w - 4} height={h - 4} fill="none" stroke="#e81b1b" strokeWidth="4" />
      ))}
      <ArrowMark from="411 680" tip="448,814" base={['434,799', '452,794', '443 797']} />
      <ArrowMark from="638 782" tip="659,811" base={['641,801', '657,791', '650 798']} />
      <ArrowMark from="829 766" tip="851,802" base={['834,791', '850,782', '843 788']} />
      <ArrowMark from="1050 785" tip="1121,705" base={['1102,713', '1116,725', '1110 718']} />
    </g>
  </Layer>
);

const TOP = 332;

const NodeEditor = () => (
  <Editor>
    <Canvas>
      <Backdrop />
      <Node title="Points" x={783} y={405 - TOP} tone={TEAL}>
        <Out label="Points" type="geo" />
        <NumRow label="Count" value="1" type="int" h={23} />
        <In label="Position:" type="vec" shape="dot" h={19} />
        <FieldStack>
          <Num value="0.000" name="Position X" />
          <Num value="0.000" name="Position Y" />
          <Num value="0.000" name="Position Z" />
        </FieldStack>
        <NumRow label="Radius" value="0.1 m" type="float" shape="dot" h={23} />
      </Node>
      <Node title="Instance on Points" x={1135} y={552 - TOP} tone={TEAL}>
        <Out label="Instances" type="geo" />
        <In label="Points" type="geo" />
        <In label="Selection" type="bool" shape="dot" />
        <In label="Instance" type="geo" />
        <CheckRow label="Pick Instance" type="bool" shape="dot" checked />
        <In label="Instance Index" type="int" shape="diamond" />
        <In label="Rotation:" type="rot" shape="dot" />
        <FieldStack>
          <Num label="X" value="0°" name="Rotation X" />
          <Num label="Y" value="0°" name="Rotation Y" />
          <Num label="Z" value="0°" name="Rotation Z" />
        </FieldStack>
        <In label="Scale:" type="vec" shape="dot" />
        <FieldStack>
          <Num label="X" value="1.000" name="Scale X" />
          <Num label="Y" value="1.000" name="Scale Y" />
          <Num label="Z" value="1.000" name="Scale Z" />
        </FieldStack>
      </Node>
      <Node title="Collection Info" x={274} y={614 - TOP} tone="#e09fa5" sel>
        <Out label="Instances" type="geo" />
        <Row $h={23} $end>
          <Toggle>
            <button aria-pressed="true">Original</button>
            <button aria-pressed="false">Relative</button>
          </Toggle>
        </Row>
        <Row>
          <Socket type="coll" />
          <Picker>
            <Icon name="collection" size={13} />
            <input defaultValue="TestObj" aria-label="Collection" />
            <button aria-label="Clear collection"><Icon name="close" size={14} /></button>
          </Picker>
        </Row>
        <CheckRow label="Separate Children" type="bool" checked />
        <CheckRow label="Reset Children" type="bool" checked />
      </Node>
      <Node title="Domain Size" x={481} y={748 - TOP} tone="#aabbd6">
        <Out label="Instance Count" type="int" />
        <SelectRow value="Instances" label="Component" icon="instance" end />
        <In label="Geometry" type="geo" />
      </Node>
      <Node title="Add" x={675} y={748 - TOP} tone={BLUE}>
        <Out label="Value" type="float" shape="dot" />
        <SelectRow value="Add" label="Operation" />
        <CheckRow label="Clamp" dim />
        <In label="Value" type="float" shape="dot" />
        <NumRow label="Value" value="1.000" type="float" shape="dot" />
      </Node>
      <Node title="Random Value" x={871} y={744 - TOP} tone={BLUE}>
        <Out label="Value" type="int" shape="diamond" />
        <SelectRow value="Integer" label="Data type" end />
        <NumRow label="Min" value="0" type="int" shape="dot" />
        <In label="Max" type="int" shape="dot" />
        <In label="ID" type="int" shape="diamond" />
        <NumRow label="Seed" value="1" type="int" shape="dot" />
      </Node>
      <Node title="Group Input" x={397} y={990 - TOP} tone="#cbcbcb">
        <Out label="Geometry" type="geo" />
        <Row $h={19}><Socket right type="none" /></Row>
      </Node>
      <Node title="Repeat" x={776} y={1055 - TOP} tone="#cbcbcb" zone>
        <NumRow label="Iterations" value="10" type="int" h={25} />
        <Row><Socket type="geo" />Geometry<Socket right type="geo" /></Row>
        <Row><Socket type="none" /><Socket right type="none" /></Row>
      </Node>
      <Node title="Join Geometry" x={1415} y={844 - TOP} tone={TEAL}>
        <Out label="Geometry" type="geo" />
        <In label="Geometry" type="geo" shape="multi" />
      </Node>
      <Node title="Repeat" x={1525} y={1033 - TOP} tone="#cbcbcb" zone>
        <Row $h={25}><Socket type="geo" />Geometry<Socket right type="geo" /></Row>
        <Row><Socket type="none" /><Socket right type="none" /></Row>
      </Node>
      <Node title="Group Output" x={1807} y={969 - TOP} tone="#cbcbcb">
        <In label="Geometry" type="geo" h={25} />
        <In type="none" h={19} />
      </Node>
      <Annotations />
    </Canvas>
    <EditorBar>
      <Bar>
        <Group><Btn $w={37} aria-label="Editor type"><Icon name="nodes" /><Chevron /></Btn></Group>
        <Dropdown w={94} value="Modifier" label="Geometry nodes type" />
        <MenuList>
          <button>View</button>
          <button>Select</button>
          <button>Add</button>
          <button>Node</button>
        </MenuList>
      </Bar>
      <Inline>
        <Group>
          <Btn $w={38} aria-label="Browse node tree"><Icon name="tree" /><Chevron /></Btn>
          <Btn $w={156}>Geometry NodesQiita</Btn>
          <Btn $w={24} $color="#777" aria-label="Fake user"><Icon name="shield" size={17} /></Btn>
          <Btn $w={24} aria-label="New node tree"><Icon name="copy" size={17} /></Btn>
          <Btn $w={24} aria-label="Unlink"><Icon name="close" size={16} /></Btn>
        </Group>
        <Icon name="pin" color="#777" />
      </Inline>
      <Bar>
        <Spacer />
        <Inline $color="#c4c4c4"><Icon name="up" size={16} /></Inline>
        <Group>
          <Btn $color="#666" aria-label="Snap"><Icon name="magnetLine" size={17} /></Btn>
          <Btn $w={39} $color="#555" aria-label="Snap target"><Icon name="snapgrid" size={17} /><Chevron /></Btn>
        </Group>
        <Group $cut>
          <Btn $on aria-label="Show overlays"><Icon name="overlay" /></Btn>
          <Btn $w={18} $px={2} $justify="flex-end" aria-label="Overlay options"><Chevron /></Btn>
        </Group>
      </Bar>
    </EditorBar>
    <Crumbs>
      <Inline $gap={11}><Icon name="object" />Qiita</Inline>
      <Inline $pl={8}>
        <svg width="8" height="12"><path d="M1 1L7 6L1 11" fill="none" stroke="#333" strokeWidth="1.300" /></svg>
      </Inline>
      <Inline $gap={11}><Icon name="nodes" />GeometryNodesQiita</Inline>
      <Inline $pl={8}>
        <svg width="8" height="12"><path d="M1 1L7 6L1 11" fill="none" stroke="#333" strokeWidth="1.300" /></svg>
      </Inline>
      <Inline $gap={11}><Icon name="tree" />Geometry NodesQiita</Inline>
    </Crumbs>
  </Editor>
);

export default function App() {
  return (
    <Page>
      <GlobalStyle />
      <TopStrip />
      <Upper>
        <Spreadsheet />
        <Viewport />
      </Upper>
      <NodeEditor />
    </Page>
  );
}
